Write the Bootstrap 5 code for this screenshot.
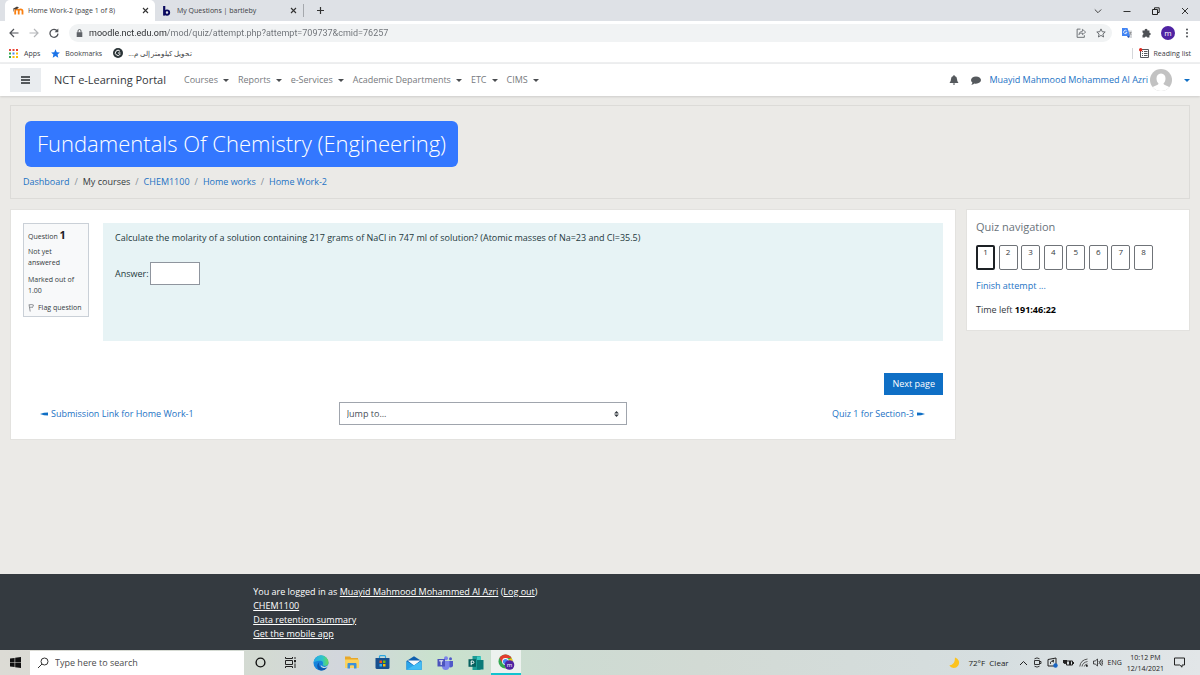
<!DOCTYPE html>
<html lang="en">
<head>
<meta charset="utf-8">
<meta name="viewport" content="width=device-width, initial-scale=1">
<title>Home Work-2 (page 1 of 8)</title>
<link href="https://cdn.jsdelivr.net/npm/bootstrap@5.3.0/dist/css/bootstrap.min.css" rel="stylesheet">
<style>
  body { font-family: "Open Sans", "Noto Sans", sans-serif; font-size: 9px; line-height: 14px; color: #343a40; background: #ebeae7; }
  a { color: #1c72c4; text-decoration: none; }
  button { font: inherit; color: inherit; background: none; border: 0; padding: 0; }
  svg { display: block; flex: none; }
  .t-tab { font-size: 7px; line-height: 11px; }
  .gap-10 { gap: 10px; }

  .tabstrip { background: #dee1e6; height: 21px; color: #3c4043; }
  .win-tab { height: 21px; padding-left: 8px; }
  .win-tab.current { background: #fff; width: 150px; margin-left: 5px; border-radius: 5px 5px 0 0; }
  .win-tab.other { width: 149px; padding-left: 8px; border-right: 1px solid #a5a8ad; height: 13px; gap: 6px; }
  .win-tab button { margin-right: 6px; }
  .win-controls { gap: 21px; padding-right: 11px; }
  .toolbar { background: #fff; height: 23px; padding: 0 11px 0 9px; color: #5f6368; }
  .omnibox { background: #f1f3f4; border-radius: 9px; height: 18px; padding: 0 6px 0 7px; gap: 6px; }
  .omnibox input { border: 0; outline: 0; padding: 0; min-width: 0; height: 16px; font-family: Roboto, sans-serif; font-size: 9px; color: transparent; background: linear-gradient(90deg, #26282b 78px, #6b6f74 78px); -webkit-background-clip: text; background-clip: text; }
  .bookmarks { background: #fff; height: 20px; padding: 0 9px; border-bottom: 2px solid #eeeff0; color: #3c4043; gap: 11px; }
  .bookmarks a { color: inherit; gap: 5px; }
  .reading { border-left: 1px solid #d5d7da; padding-left: 6px; }

  .portal-nav { background: #fff; height: 32px; padding: 0 10px; box-shadow: 0 1px 2px rgba(0,0,0,.12); }
  .burger { width: 31px; height: 24px; background: #e9ecef; }
  .portal-name { font-size: 11px; color: #34383c; margin-left: 13px; margin-right: 18px; }
  .menus { gap: 9px; }
  .menu-item { color: #777a7e; gap: 5px; }
  .caret-down { width: 0; height: 0; border: 3px solid transparent; border-top-color: #4a4d50; border-bottom: 0; }
  .caret-down.blue { border-top-color: #0f6fc5; }
  .user-tools { gap: 12px; }
  .user-menu { gap: 2px; margin-left: -4px; }
  .user-menu .caret-down { margin-left: 10px; }

  .page-area { padding: 9px 10px; }
  .course-head { border: 1px solid #dcdbd8; padding: 15px 12px 9px; }
  .course-title { background: #3377ff; color: #fff; border-radius: 6px; font-size: 22px; line-height: 44px; font-weight: 300; padding: 0 12px 2px; margin: 0 0 8px 2px; }
  .crumbs { --bs-breadcrumb-item-padding-x: 5px; --bs-breadcrumb-divider-color: #868e96; font-size: 9px; }
  .content-row { gap: 10px; margin-top: 10px; }
  .panel { background: #fff; border: 1px solid #e3e2df; }
  .quiz { padding: 13px 12px 14px; }
  .q-info { width: 66px; border: 1px solid #cad0d7; background: #f8f9fa; padding: 4px 4px 3px; }
  .q-info h2 { font-size: 7px; line-height: 14px; margin: 0 0 2px; font-weight: 400; }
  .q-info strong { font-size: 11px; color: #1d2125; }
  .q-info div { margin-bottom: 6px; }
  .q-body { background: #e7f3f5; color: #24393d; min-height: 118px; margin-left: 14px; padding: 8px 12px; }
  .answer-row { margin-top: 17px; }
  .answer { width: 50px; height: 23px; border: 1px solid #8f959e; background: #fff; margin-left: 1px; }
  .next-row { margin-top: 32px; }
  .next { background: #0f6fc5; color: #fff; padding: 4px 8px; }
  .jump-row { margin-top: 7px; }
  .jump-row a { gap: 3px; }
  .prev-link { padding-left: 17px; }
  .next-link { padding-right: 18px; }
  .jump-col { padding: 0 9px; }
  .jump { width: 100%; height: 23px; border: 1px solid #a0a5ad; border-radius: 0; padding: 0 7px; font-size: 9px; color: #495057; appearance: none;
    background: #fff url("data:image/svg+xml,%3csvg xmlns='http://www.w3.org/2000/svg' viewBox='0 0 4 5'%3e%3cpath fill='%23343a40' d='M2 0L0 2h4zm0 5L0 3h4z'/%3e%3c/svg%3e") no-repeat right 7px center / 5px 6px; }
  .side { width: 224px; padding: 9px 9px 13px; }
  .side h2 { font-size: 11px; line-height: 16px; font-weight: 400; color: #6a737b; margin: 0 0 10px; }
  .qn-row { width: 177px; }
  .qn { width: 19px; height: 25px; border: 1px solid #6f7378; border-radius: 2px; text-align: center; color: #34383c; font-size: 8px; line-height: 12px; }
  .qn.thispage { border: 2px solid #1d2125; line-height: 10px; }
  .finish { margin: 9px 0 10px; }

  .site-foot { background: #343a40; color: #fff; padding: 11px 0 9px 21.1%; }
  .site-foot a { color: #fff; text-decoration: underline; }
  .taskbar { height: 25px; background: linear-gradient(90deg, #dcdbd5 0, #d3dad2 260px, #d2d6dc 340px, #c9e2cd 440px, #cddbd2 560px, #d2dad4 700px, #d6dee0 1000px, #e2e6e8 100%); color: #222; }
  .start { width: 30px; }
  .search { width: 214px; height: 24px; background: #fff; padding-left: 7px; gap: 6px; margin-right: 1px; }
  .search input { border: 0; outline: 0; padding: 0; width: 150px; font-size: 9px; background: none; }
  .search input::placeholder { color: #4b4b4b; opacity: 1; }
  .task { width: 31px; height: 25px; }
  .task.narrow { width: 30px; }
  .task.running { background: #edf2ef; border-bottom: 2px solid #13c3cf; width: 30px; }
  .tray { font-size: 8px; line-height: 11px; padding-right: 15px; gap: 10px; }
  .tray-icons { gap: 5px; }
</style>
</head>
<body class="d-flex flex-column min-vh-100">

<header>
  <div class="tabstrip d-flex align-items-center t-tab">
    <div class="win-tab current d-flex align-items-center">
      <svg width="11" height="9" viewBox="0 0 11 9"><path d="M2.200 8.500V5q0-1.600 1.700-1.600T5.700 5v3.500M5.700 5q0-1.600 1.900-1.600T9.500 5v3.500" fill="none" stroke="#f98012" stroke-width="1.800"/><path d="M0 2.800L4 .5l2 1.200-2.600 1.600L1 3.400v2H.5v-2z" fill="#4a4038"/></svg>
      <span class="ms-1">Home Work-2 (page 1 of 8)</span>
      <button class="ms-auto" aria-label="Close tab"><svg width="7" height="7" viewBox="0 0 7 7"><path d="M1 1l5 5M6 1L1 6" stroke="#333" stroke-width="1.100"/></svg></button>
    </div>
    <div class="win-tab other d-flex align-items-center">
      <svg width="8" height="10" viewBox="0 0 8 10"><path d="M1.200 0v9.600" stroke="#0b0a5e" stroke-width="2.200"/><circle cx="4" cy="6.600" r="2.200" fill="none" stroke="#0b0a5e" stroke-width="1.900"/></svg>
      <span>My Questions | bartleby</span>
      <button class="ms-auto" aria-label="Close tab"><svg width="7" height="7" viewBox="0 0 7 7"><path d="M1 1l5 5M6 1L1 6" stroke="#333" stroke-width="1.100"/></svg></button>
    </div>
    <button class="ms-2 ps-1" aria-label="New tab"><svg width="9" height="9" viewBox="0 0 9 9"><path d="M4.500 1v7M1 4.500h7" stroke="#333" stroke-width="1.200"/></svg></button>
    <div class="win-controls ms-auto d-flex align-items-center">
      <button aria-label="Search tabs"><svg width="8" height="8" viewBox="0 0 8 8"><path d="M.8 2.500L4 5.700l3.200-3.200" fill="none" stroke="#444"/></svg></button>
      <button aria-label="Minimize"><svg width="8" height="8" viewBox="0 0 8 8"><path d="M.5 4.500h7" stroke="#333"/></svg></button>
      <button aria-label="Restore"><svg width="8" height="8" viewBox="0 0 8 8"><path d="M.5 2.500h5v5h-5zM2.500 2V.8h4.700v4.700H6" fill="none" stroke="#222"/></svg></button>
      <button aria-label="Close"><svg width="8" height="8" viewBox="0 0 8 8"><path d="M1 1l6 6M7 1L1 7" stroke="#333"/></svg></button>
    </div>
  </div>

  <div class="toolbar d-flex align-items-center gap-10">
    <button aria-label="Back"><svg width="10" height="10" viewBox="0 0 10 10"><path d="M9.500 5H1.200M5 1L1 5l4 4" fill="none" stroke="#505358" stroke-width="1.200"/></svg></button>
    <button aria-label="Forward"><svg width="10" height="10" viewBox="0 0 10 10"><path d="M.5 5h8.300M5 1l4 4-4 4" fill="none" stroke="#b4b6b9" stroke-width="1.200"/></svg></button>
    <button aria-label="Reload"><svg width="10" height="10" viewBox="0 0 10 10"><path d="M8.300 3A4 4 0 1 0 9 5.600" fill="none" stroke="#505358" stroke-width="1.300"/><path d="M9.300.6v3.700H5.600z" fill="#505358"/></svg></button>
    <div class="omnibox flex-grow-1 d-flex align-items-center">
      <svg width="7" height="8" viewBox="0 0 7 8"><path d="M.7 3.200h5.600V8H.7z" fill="#5f6368"/><path d="M2 3.500V2a1.500 1.500 0 0 1 3 0v1.500" fill="none" stroke="#5f6368"/></svg>
      <input class="flex-grow-1" type="text" aria-label="Address" value="moodle.nct.edu.om/mod/quiz/attempt.php?attempt=709737&amp;cmid=76257">
      <button aria-label="Share"><svg width="10" height="10" viewBox="0 0 9 9"><path d="M4 1H1v7.400h6.500V6.500" fill="none" stroke="#5f6368" stroke-width=".8"/><path d="M2.500 6q.4-3 3.300-3V1.200L8.700 3.700 5.800 6V4.500Q4 4.300 2.500 6z" fill="none" stroke="#5f6368" stroke-width=".7"/></svg></button>
      <button class="ms-1" aria-label="Bookmark this page"><svg width="10" height="10" viewBox="0 0 10 10"><path d="M5 .9l1.200 2.800 3 .3-2.300 2 .7 3L5 7.400 2.400 9l.7-3L.8 4l3-.3z" fill="none" stroke="#5f6368" stroke-width=".9"/></svg></button>
    </div>
    <button aria-label="Translate"><svg width="10" height="10" viewBox="0 0 10 10"><path d="M4 2.500h6V10H6z" fill="#d5d7da"/><path d="M0 0h5.500L8 8H0z" fill="#4285f4"/><path d="M5 8h3L6.300 10z" fill="#2556b8"/><path d="M4.600 2.800a1.700 1.700 0 1 0 .4 1.600H3.500" fill="none" stroke="#fff" stroke-width=".8"/><path d="M7.200 4.500h2.500M8.500 4v.5q0 1.500-1 2.500M7.800 5l1.500 2" stroke="#777" stroke-width=".5" fill="none"/></svg></button>
    <button aria-label="Extensions"><svg width="9" height="10" viewBox="0 0 9 10"><path d="M.5 2.500h2.200a1.400 1.400 0 1 1 2.700 0h2v2.200a1.300 1.300 0 1 1 0 2.600v2.200H5.300a1.300 1.300 0 0 0-2.500 0H.5V7a1.300 1.300 0 0 0 0-2.500z" fill="#4e5155"/></svg></button>
    <button aria-label="Profile"><svg width="14" height="14" viewBox="0 0 14 14"><circle cx="7" cy="7" r="7" fill="#4f23a3"/><text x="7" y="9.500" font-size="8" fill="#fff" text-anchor="middle">m</text></svg></button>
    <button aria-label="Menu"><svg width="4" height="10" viewBox="0 0 4 10"><g fill="#4e5155"><circle cx="2" cy="1.500" r="1"/><circle cx="2" cy="5" r="1"/><circle cx="2" cy="8.500" r="1"/></g></svg></button>
  </div>

  <div class="bookmarks d-flex align-items-center t-tab">
    <a href="#" class="d-flex align-items-center"><svg width="10" height="9" viewBox="0 0 10 9"><path d="M0 0h2v2H0zM3.500 0h2v2h-2zM7 0h2v2H7z" fill="#ea4335"/><path d="M0 3.500h2v2H0zM0 7h2v2H0z" fill="#34a853"/><path d="M3.500 3.500h2v2h-2z" fill="#4285f4"/><path d="M7 3.500h2v2H7zM3.500 7h2v2h-2zM7 7h2v2H7z" fill="#fbbc05"/></svg>Apps</a>
    <a href="#" class="d-flex align-items-center"><svg width="9" height="9" viewBox="0 0 10 10"><path d="M5 .3l1.400 3.200 3.500.3-2.600 2.300.8 3.500L5 7.800 1.900 9.600l.8-3.500L.1 3.800l3.500-.3z" fill="#1a73e8"/></svg>Bookmarks</a>
    <a href="#" class="d-flex align-items-center"><svg width="10" height="10" viewBox="0 0 10 10"><circle cx="5" cy="5" r="5" fill="#2b3437"/><path d="M7 3.300A2.600 2.600 0 1 0 7.300 6M5 5h2.500" fill="none" stroke="#fff" stroke-width="1"/></svg><span dir="rtl" lang="ar">تحويل كيلومتر إلى م...</span></a>
    <a href="#" class="reading d-flex align-items-center ms-auto"><svg width="10" height="10" viewBox="0 0 10 10"><path d="M1.500 1.500h8v8h-8z" fill="none" stroke="#55585c"/><path d="M3 3.500h1M3 5.500h1M3 7.500h1M5 3.500h3.500M5 5.500h3.500M5 7.500h3.500" stroke="#55585c"/><circle cx="1.700" cy="1.700" r="1.700" fill="#e0261c"/></svg>Reading list</a>
  </div>

  <nav class="portal-nav d-flex align-items-center">
    <button class="burger d-flex align-items-center justify-content-center" aria-label="Side panel"><svg width="9" height="8" viewBox="0 0 9 8"><path d="M0 1h9M0 4h9M0 7h9" stroke="#25292c" stroke-width="1.300"/></svg></button>
    <a class="portal-name" href="#">NCT e-Learning Portal</a>
    <div class="d-flex menus">
      <a href="#" class="menu-item d-flex align-items-center">Courses<span class="caret-down"></span></a>
      <a href="#" class="menu-item d-flex align-items-center">Reports<span class="caret-down"></span></a>
      <a href="#" class="menu-item d-flex align-items-center">e-Services<span class="caret-down"></span></a>
      <a href="#" class="menu-item d-flex align-items-center">Academic Departments<span class="caret-down"></span></a>
      <a href="#" class="menu-item d-flex align-items-center">ETC<span class="caret-down"></span></a>
      <a href="#" class="menu-item d-flex align-items-center">CIMS<span class="caret-down"></span></a>
    </div>
    <div class="user-tools ms-auto d-flex align-items-center">
      <button aria-label="Notifications"><svg width="10" height="10" viewBox="0 0 10 10"><path d="M5 0q.7 0 .7.900Q8 1.500 8 4q0 2.500 1.500 4h-9Q2 6.500 2 4q0-2.500 2.300-3.100Q4.300 0 5 0zM3.800 8.500h2.400Q6 9.700 5 9.700T3.800 8.500z" fill="#55595d"/></svg></button>
      <button aria-label="Messages"><svg width="10" height="9" viewBox="0 0 10 9"><path d="M5 .5c2.800 0 5 1.600 5 3.600S7.800 7.700 5 7.700q-.8 0-1.600-.2Q2 8.700.3 8.700 1.400 7.700 1.400 6.600 0 5.600 0 4.100C0 2.100 2.200.5 5 .5z" fill="#55595d"/></svg></button>
      <a href="#" class="user-menu d-flex align-items-center">Muayid Mahmood Mohammed Al Azri
        <svg width="22" height="22" viewBox="0 0 22 22"><clipPath id="av"><circle cx="11" cy="11" r="11"/></clipPath><g clip-path="url(#av)"><path d="M0 0h22v22H0z" fill="#c2c2c2"/><path d="M11 4.500c3 0 4.500 2.200 4.500 5 0 2-.8 4-2 5 0 2 6 2 6.500 5V22H2v-2.500c.5-3 6.500-3 6.500-5-1.200-1-2-3-2-5 0-2.800 1.500-5 4.500-5z" fill="#fff"/></g></svg>
        <span class="caret-down blue"></span></a>
    </div>
  </nav>
</header>

<main class="page-area flex-grow-1">
  <section class="course-head">
    <h1 class="course-title d-inline-block">Fundamentals Of Chemistry (Engineering)</h1>
    <nav aria-label="breadcrumb"><ol class="breadcrumb crumbs mb-0">
      <li class="breadcrumb-item"><a href="#">Dashboard</a></li>
      <li class="breadcrumb-item">My courses</li>
      <li class="breadcrumb-item"><a href="#">CHEM1100</a></li>
      <li class="breadcrumb-item"><a href="#">Home works</a></li>
      <li class="breadcrumb-item"><a href="#">Home Work-2</a></li>
    </ol></nav>
  </section>

  <div class="d-flex align-items-start content-row">
    <section class="panel quiz flex-grow-1">
      <div class="d-flex align-items-start">
        <div class="q-info t-tab flex-shrink-0">
          <h2>Question <strong>1</strong></h2>
          <div>Not yet<br>answered</div>
          <div>Marked out of 1.00</div>
          <a href="#" class="text-reset d-flex align-items-center gap-1"><svg width="6" height="8" viewBox="0 0 6 8"><path d="M1 .5l1.200 7M1 1q2-1 4.500 0L4.500 3.500q-1.500-.8-2.900 0" fill="none" stroke="#777b80" stroke-width=".8"/></svg>Flag question</a>
        </div>
        <div class="q-body flex-grow-1">
          <div>Calculate the molarity of a solution containing 217 grams of NaCl in 747 ml of solution? (Atomic masses of Na=23 and Cl=35.5)</div>
          <div class="answer-row d-flex align-items-center"><label for="ans">Answer:</label><input id="ans" class="answer" type="text"></div>
        </div>
      </div>
      <div class="next-row d-flex justify-content-end"><button class="next">Next page</button></div>
      <div class="row g-0 align-items-center jump-row">
        <div class="col-4"><a href="#" class="prev-link d-flex align-items-center"><svg width="8" height="4" viewBox="0 0 8 4"><path d="M0 2L4 .8 8 .5v3L4 3.200z" fill="#0f6fc5"/></svg>Submission Link for Home Work-1</a></div>
        <div class="col-4 jump-col"><select class="jump" aria-label="Jump to..."><option>Jump to...</option></select></div>
        <div class="col-4"><a href="#" class="next-link d-flex align-items-center justify-content-end">Quiz 1 for Section-3<svg width="8" height="4" viewBox="0 0 8 4"><path d="M8 2L4 .8 0 .5v3l4-.3z" fill="#0f6fc5"/></svg></a></div>
      </div>
    </section>

    <aside class="panel side flex-shrink-0">
      <h2>Quiz navigation</h2>
      <div class="d-flex justify-content-between qn-row">
        <a href="#" class="qn thispage">1</a><a href="#" class="qn">2</a><a href="#" class="qn">3</a><a href="#" class="qn">4</a><a href="#" class="qn">5</a><a href="#" class="qn">6</a><a href="#" class="qn">7</a><a href="#" class="qn">8</a>
      </div>
      <div class="finish"><a href="#">Finish attempt ...</a></div>
      <div>Time left <strong class="text-black">191:46:22</strong></div>
    </aside>
  </div>
</main>

<footer class="site-foot">
  <div>You are logged in as <a href="#">Muayid Mahmood Mohammed Al Azri</a> (<a href="#">Log out</a>)</div>
  <div><a href="#">CHEM1100</a></div>
  <div><a href="#">Data retention summary</a></div>
  <div><a href="#">Get the mobile app</a></div>
</footer>

<div class="taskbar d-flex align-items-center">
  <button class="start" aria-label="Start"><svg class="mx-auto" width="11" height="11" viewBox="0 0 11 11"><path d="M0 1.600l4.600-.7v4.300H0zM5.200.8L11 0v5.200H5.200zM0 5.800h4.600v4.300L0 9.400zM5.200 5.800H11V11l-5.800-.8z" fill="#111"/></svg></button>
  <div class="search d-flex align-items-center"><svg width="12" height="12" viewBox="0 0 12 12"><circle cx="7.500" cy="4.500" r="3.500" fill="none" stroke="#333"/><path d="M5 7L1 11" stroke="#333"/></svg><input type="text" placeholder="Type here to search" aria-label="Search"></div>
  <button class="task narrow d-flex align-items-center justify-content-center" aria-label="Cortana"><svg width="11" height="11" viewBox="0 0 11 11"><circle cx="5.500" cy="5.500" r="4.400" fill="none" stroke="#111" stroke-width="1.400"/></svg></button>
  <button class="task narrow d-flex align-items-center justify-content-center" aria-label="Task view"><svg width="11" height="11" viewBox="0 0 11 11"><path d="M.5 3.500h7v4h-7zM.5 0v1.500h7V0M.5 11V9.500h7V11M10 0v2M10 6.500V11" fill="none" stroke="#222"/><path d="M9 3h2v2.200H9z" fill="#222"/></svg></button>
  <button class="task d-flex align-items-center justify-content-center" aria-label="Edge"><svg width="16" height="16" viewBox="0 0 16 16"><defs><linearGradient id="eg" x1="0" x2="1"><stop offset="0" stop-color="#28a8e8"/><stop offset=".6" stop-color="#2ec4c8"/><stop offset="1" stop-color="#6bdc55"/></linearGradient></defs><circle cx="8" cy="8" r="7.500" fill="#1684dc"/><path d="M.5 8A7.500 7.500 0 0 1 15.500 7.500C15.500 10 13.500 11 11.800 11c-1.500 0-2.400-.6-2.200-1.200.9-.8.9-3.800-2.100-4C4 5.500 1.500 6.500.5 8z" fill="url(#eg)"/><path d="M6.500 7C5 9 6.500 13 10.500 13.300q2 .1 4-1.300Q12 15.800 8 15.500C3.500 15 3 9 6.500 7z" fill="#0f57ae"/><path d="M15.600 9q-.3 2-1.200 3-2 1.400-4.200 1Q7.500 12 7.600 10q2 2 4.200 2 2.600-.3 3.800-3z" fill="#d4dfe0"/></svg></button>
  <button class="task d-flex align-items-center justify-content-center" aria-label="File Explorer"><svg width="14" height="13" viewBox="0 0 14 13"><path d="M0 .5h5l1.200 1.500H13v3H0z" fill="#e8a72a"/><path d="M0 3.500h14V12H0z" fill="#fbd35f"/><path d="M2.500 12.500V8q0-1 1-1h7q1 0 1 1v4.500H9V10q0-.8-.8-.8H5.800Q5 9.200 5 10v2.500z" fill="#3e91d8"/></svg></button>
  <button class="task d-flex align-items-center justify-content-center" aria-label="Store"><svg width="15" height="15" viewBox="0 0 15 15"><path d="M4.500 4V1.600q0-.9.9-.9h4.200q.9 0 .9.900V4" fill="none" stroke="#2ba6e0" stroke-width="1.200"/><path d="M.5 3h14v9.500q0 1.500-1.500 1.500H2Q.5 14 .5 12.500z" fill="#174f8e"/><path d="M4.500 5.500H7V8H4.500z" fill="#f25022"/><path d="M8 5.500h2.500V8H8z" fill="#7fba00"/><path d="M4.500 9H7v2.500H4.500z" fill="#2fb5f2"/><path d="M8 9h2.500v2.500H8z" fill="#ffb900"/></svg></button>
  <button class="task d-flex align-items-center justify-content-center" aria-label="Mail"><svg width="16" height="14" viewBox="0 0 16 14"><path d="M.5 5L8 .3 15.500 5v8.700H.5z" fill="#0f5fae"/><path d="M1.500 4.500h13L8 9.500z" fill="#f6fafc"/><path d="M.5 5L8 9.700 15.500 5v8.700H.5z" fill="#2aa5ea"/><path d="M.5 13.700L15.500 5v8.700z" fill="#42bdf5"/></svg></button>
  <button class="task d-flex align-items-center justify-content-center" aria-label="Teams"><svg width="16" height="14" viewBox="0 0 16 14"><circle cx="9" cy="2.200" r="2" fill="#7b83eb"/><circle cx="13.500" cy="2.700" r="1.500" fill="#5059c9"/><path d="M11 5h5v4.500q0 2-2.500 2T11 9.500z" fill="#5059c9"/><path d="M5 5h7.500v5.500Q12 14 8.700 14T5 10.500z" fill="#7b83eb"/><path d="M.5 3h7.500v7.500H.5z" fill="#4b53bc"/><path d="M2.200 4.800h4M4.200 4.800V9" stroke="#fff"/></svg></button>
  <button class="task d-flex align-items-center justify-content-center" aria-label="Publisher"><svg width="16" height="14" viewBox="0 0 16 14"><path d="M4.500 0h8v14h-8z" fill="#1b9b95"/><path d="M9 .5h4v5H9z" fill="#3ccdc4"/><path d="M9 4h6.500v9.500H9z" fill="#0b7b78"/><path d="M.5 3.200H8v7.600H.5z" fill="#07615f"/><path d="M3.200 9.300V5h1.200q1.500 0 1.500 1.300T4.400 7.600H3.300" fill="none" stroke="#fff"/></svg></button>
  <button class="task running d-flex align-items-center justify-content-center" aria-label="Chrome"><svg width="17" height="16" viewBox="0 0 17 16"><circle cx="7.500" cy="7.500" r="7" fill="#34a853"/><path d="M7.500 7.500L13.560 4A7 7 0 0 1 7.500 14.500z" fill="#fbc116"/><path d="M7.500 4h6.060A7 7 0 0 0 1.440 4l3 5z" fill="#e33b2e"/><circle cx="7.500" cy="7.500" r="3.400" fill="#fff"/><circle cx="7.500" cy="7.500" r="2.600" fill="#4285f4"/><circle cx="11.500" cy="11" r="4.800" fill="#4f23a3"/><text x="11.500" y="13" font-size="6" fill="#fff" text-anchor="middle">m</text></svg></button>

  <div class="tray ms-auto d-flex align-items-center">
    <div class="d-flex align-items-center gap-2"><svg width="11" height="11" viewBox="0 0 11 11"><path d="M6 .5A5.300 5.300 0 1 1 .3 8.500Q6 8 6 .5z" fill="#fcc31e"/></svg>
    <span>72°F&nbsp; Clear</span></div>
    <div class="d-flex align-items-center tray-icons">
      <svg width="9" height="6" viewBox="0 0 8 6"><path d="M.5 5L4 1.500 7.500 5" fill="none" stroke="#222"/></svg>
      <svg width="9" height="11" viewBox="0 0 9 11"><path d="M1.500 3.500h5v4h-5zM6.500 4.500h1.500v2H6.500M1.500 1.800Q4 0 6.500 1.800M1.500 9.200Q4 11 6.500 9.200" fill="none" stroke="#222" stroke-width=".9"/></svg>
      <svg width="11" height="11" viewBox="0 0 11 11"><path d="M1 2.500l8-1.500v8H1z" fill="none" stroke="#222"/><path d="M3.500 7V5l3-2v2.500M5 5l2-2" fill="none" stroke="#222" stroke-width=".8"/><circle cx="8.500" cy="8.500" r="2.200" fill="#1a66c4"/></svg>
      <svg width="11" height="8" viewBox="0 0 11 8"><path d="M3.500 2h6v4h-6zM10.500 3v2" fill="none" stroke="#222"/><path d="M6 2h2v4H6z" fill="#222"/><path d="M0 1h4v2.500L2.500 5H1.500L0 3.500z" fill="#222"/></svg>
      <svg width="9" height="9" viewBox="0 0 9 9"><path d="M.8 8.500Q1.500 2 8.500 1M3 8.500Q3.500 4.500 8.500 3.500M5.300 8.500Q5.500 6.500 8.500 6" fill="none" stroke="#444" stroke-width=".9"/><path d="M7 7h1.700v1.700H7z" fill="#222"/></svg>
      <svg width="10" height="9" viewBox="0 0 10 9"><path d="M.5 3h1.700l2.300-2v7L2.200 6H.5zM6 3q1 1.500 0 3M7.300 2q1.700 2.500 0 5M8.600 1q2.300 3.500 0 7" fill="none" stroke="#222" stroke-width=".8"/></svg>
      <span class="t-tab">ENG</span>
      <div class="text-center t-tab">10:12 PM<br>12/14/2021</div>
    </div>
    <button aria-label="Action center"><svg width="11" height="11" viewBox="0 0 11 11"><path d="M.5 1h10v7H8v2.200L5.800 8H.5z" fill="none" stroke="#222"/></svg></button>
  </div>
</div>
<script src="https://cdn.jsdelivr.net/npm/bootstrap@5.3.0/dist/js/bootstrap.bundle.min.js"></script>
</body>
</html>
